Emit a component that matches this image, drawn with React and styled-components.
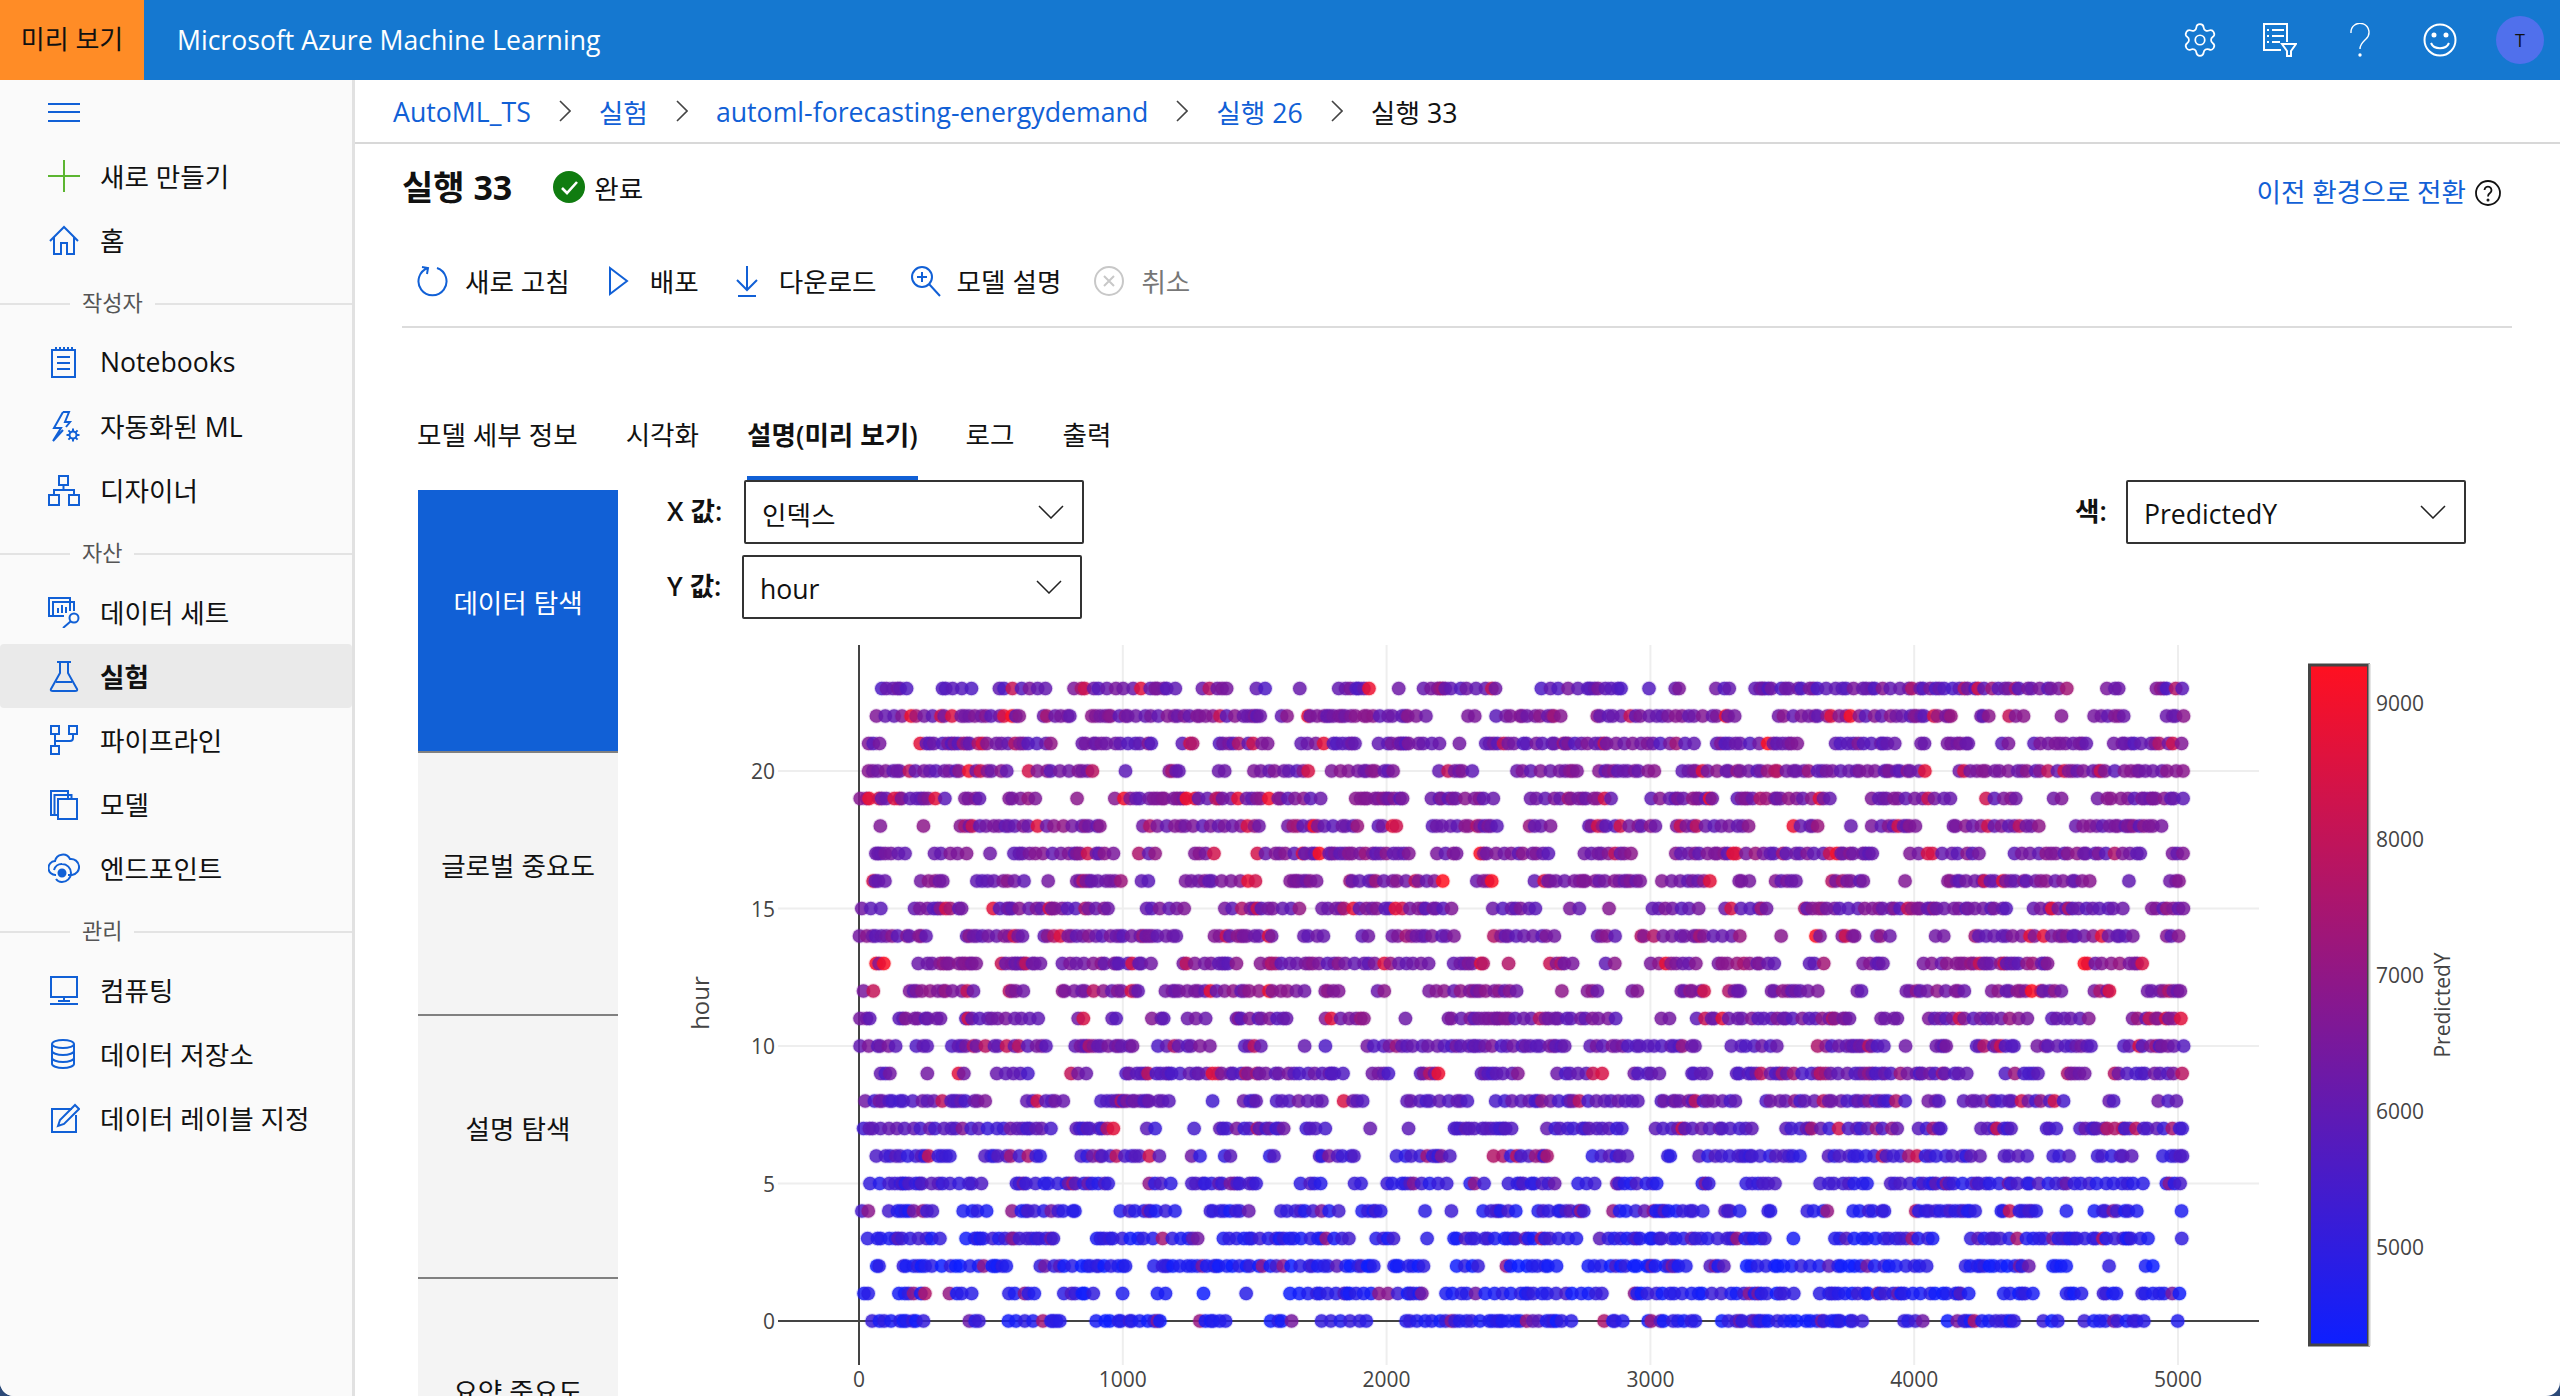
import React from "react";
import styled, { createGlobalStyle } from "styled-components";
import { Settings } from "lucide-react";

const BLUE = "#1160d6";
const FONT = `"Open Sans", "Noto Sans CJK KR", sans-serif`;

const GlobalStyle = createGlobalStyle`
  html, body {
    margin: 0;
    padding: 0;
    background: #2c4a78;
    overflow: hidden;
  }
  body {
    font-family: ${FONT};
    color: #111;
  }
`;

const Frame = styled.div`
  width: 2560px;
  height: 1396px;
  background: #fff;
  display: flex;
  flex-direction: column;
  overflow: hidden;
  border-radius: 0 0 14px 14px;
`;

/* top bar */
const TopBar = styled.header`
  height: 80px;
  flex: none;
  background: #1578d0;
  display: flex;
  align-items: center;
`;

const Preview = styled.div`
  width: 144px;
  height: 76px;
  padding-bottom: 4px;
  background: #ff8c26;
  color: #111;
  font-size: 26px;
  display: flex;
  align-items: center;
  justify-content: center;
`;

const Product = styled.div`
  margin-left: 33px;
  color: #fff;
  font-size: 26.6px;
  flex: 1;
`;

const TopIcons = styled.div`
  display: flex;
  align-items: center;
  padding-right: 16px;
`;

const TopIcon = styled.div`
  width: 80px;
  height: 80px;
  display: flex;
  align-items: center;
  justify-content: center;
  color: #fff;
`;

const Avatar = styled.div`
  width: 48px;
  height: 48px;
  margin-left: 16px;
  border-radius: 50%;
  background: #5070ec;
  color: #111;
  font-size: 18px;
  display: flex;
  align-items: center;
  justify-content: center;
`;

/* side nav */
const Body = styled.div`
  flex: 1;
  min-height: 0;
  display: flex;
`;

const Sidebar = styled.nav`
  width: 352px;
  flex: none;
  background: #fafafa;
  border-right: 3px solid #e1e1e1;
`;

const NavItem = styled.div`
  height: 64px;
  box-sizing: border-box;
  padding: 0 0 1px 48px;
  display: flex;
  align-items: center;
  gap: 20px;
  font-size: 26.6px;
  font-weight: ${(p) => (p.$active ? 700 : 400)};
  background: ${(p) => (p.$active ? "#eaeaea" : "transparent")};
  border-radius: 4px;
  color: #111;
`;

const NavSection = styled.div`
  height: 58px;
  display: flex;
  align-items: center;
  font-size: 22px;
  color: #555;

  &::before {
    content: "";
    width: 70px;
    height: 2px;
    margin-top: 6px;
    background: #e3e3e3;
  }
  &::after {
    content: "";
    flex: 1;
    height: 2px;
    margin-top: 6px;
    background: #e3e3e3;
  }
  span {
    padding: 0 12px;
  }
`;

const IconSvg = styled.svg`
  width: 32px;
  height: 32px;
  flex: none;
  fill: none;
  stroke: ${(p) => p.$color || BLUE};
  stroke-width: 2;
`;

/* main */
const Main = styled.main`
  flex: 1;
  min-width: 0;
  display: flex;
  flex-direction: column;
`;

const Breadcrumb = styled.div`
  height: 62px;
  flex: none;
  border-bottom: 2px solid #d8d8d8;
  padding-left: 38px;
  display: flex;
  align-items: center;
  gap: 28px;
  font-size: 26.7px;
`;

const Crumb = styled.span`
  color: ${(p) => (p.$current ? "#111" : BLUE)};
`;

const Head = styled.div`
  margin: 0 48px 0 47px;
  flex: none;
`;

const HeaderRow = styled.div`
  height: 86px;
  display: flex;
  align-items: center;
`;

const Title = styled.h1`
  margin: 0 41px 0 0;
  font-size: 34px;
  font-weight: 700;
  padding-bottom: 3px;
`;

const Status = styled.div`
  display: flex;
  align-items: center;
  gap: 9px;
  font-size: 26.6px;
  flex: 1;
`;

const SwitchLink = styled.div`
  display: flex;
  align-items: center;
  gap: 9px;
  margin-right: 11px;
  padding-top: 6px;
  color: ${BLUE};
  font-size: 26.6px;

  svg {
    margin-top: 6px;
  }
`;

const Toolbar = styled.div`
  height: 92px;
  padding: 4px 0 0 15px;
  border-bottom: 2px solid #dcdcdc;
  display: flex;
  align-items: center;
  gap: 32px;
`;

const ToolButton = styled.div`
  display: flex;
  align-items: center;
  gap: 16px;
  font-size: 26.6px;
  color: ${(p) => (p.$disabled ? "#777" : "#111")};

  svg {
    margin-top: 2px;
  }
`;

const Tabs = styled.div`
  margin-top: 72px;
  height: 80px;
  padding-left: 15px;
  display: flex;
  gap: 48px;
`;

const Tab = styled.div`
  height: 80px;
  box-sizing: border-box;
  padding-bottom: 9px;
  display: flex;
  align-items: center;
  font-size: 26.6px;
  font-weight: ${(p) => (p.$active ? 600 : 400)};
  border-bottom: 4px solid ${(p) => (p.$active ? BLUE : "transparent")};
`;

const Workspace = styled.div`
  flex: 1;
  min-height: 0;
  display: flex;
  overflow: hidden;
`;

const SideTabs = styled.div`
  width: 200px;
  flex: none;
  margin: 10px 0 0 63px;
`;

const SideTab = styled.div`
  height: 263px;
  box-sizing: border-box;
  padding-bottom: 38px;
  display: flex;
  align-items: center;
  justify-content: center;
  font-size: 26.6px;
  background: ${(p) => (p.$active ? BLUE : "#f4f4f4")};
  color: ${(p) => (p.$active ? "#fff" : "#111")};
  border-bottom: 2px solid #808080;
`;

const Panel = styled.div`
  flex: 1;
  min-width: 0;
`;

const Controls = styled.div`
  padding: 0 94px 0 49px;
`;

const ControlRow = styled.div`
  display: flex;
  justify-content: space-between;
  margin-top: ${(p) => p.$gap || 0}px;
`;

const Field = styled.div`
  display: flex;
  align-items: center;
`;

const FieldLabel = styled.label`
  width: ${(p) => p.$width}px;
  font-size: 26.6px;
  font-weight: 600;
  padding-bottom: 6px;
`;

const Select = styled.div`
  width: 340px;
  height: 64px;
  box-sizing: border-box;
  border: 2px solid #333;
  border-radius: 2px;
  padding: 3px 18px 0 16px;
  display: flex;
  align-items: center;
  justify-content: space-between;
  font-size: 26.6px;
  background: #fff;

  svg {
    margin-top: -3px;
  }
`;

const ChartBox = styled.div`
  margin: 20px 0 0 22px;
  width: 1920px;
  height: 756px;
`;

const ChartText = styled.text`
  font-family: ${FONT};
  font-size: ${(p) => p.$size || 21}px;
  fill: #444;
`;

/* icons */
const Icon = ({ children, color, ...rest }) => (
  <IconSvg viewBox="0 0 32 32" $color={color} {...rest}>
    {children}
  </IconSvg>
);

const Chevron = () => (
  <svg width="12" height="22" viewBox="0 0 12 22" fill="none" stroke="#444" strokeWidth="1.6">
    <path d="M1 1l10 10L1 21" />
  </svg>
);

const SelectChevron = () => (
  <svg width="26" height="14" viewBox="0 0 26 14" fill="none" stroke="#222" strokeWidth="1.5">
    <path d="M1 1l12 12L25 1" />
  </svg>
);

const icons = {
  menu: <path d="M0 8h32M0 16h32M0 25h32" />,
  plus: <path d="M16 0v32M0 16h32" />,
  home: <path d="M2 17L16 3l14 14M6 13v17h7V19h6v11h7V13" />,
  notebook: (
    <>
      <rect x="4" y="4" width="23" height="27" />
      <path d="M8 1v3M12 1v3M16 1v3M20 1v3M24 1v3M9 11h13M9 17h13M9 23h13" />
    </>
  ),
  auto: (
    <>
      <path d="M15 2h6l-4 10h5l-4 5M15 2L6 18h7L5 31l10-11" />
      <circle cx="25" cy="25" r="3.5" />
      <path d="M25 18.5v3M25 28.5v3M18.5 25h3M28.5 25h3M20.4 20.4l2 2M27.6 27.6l2 2M29.6 20.4l-2 2M22.4 27.6l-2 2" />
    </>
  ),
  designer: (
    <>
      <rect x="11" y="2" width="9" height="9" />
      <rect x="1" y="21" width="10" height="10" />
      <rect x="21" y="21" width="10" height="10" />
      <path d="M15.5 11v5M6 21v-5h20v5" />
    </>
  ),
  dataset: (
    <>
      <path d="M22 15V2H1v18h15" />
      <path d="M5 20V6h21v9" />
      <path d="M10 17v-5M14 17V9M18 17v-6" />
      <circle cx="26" cy="22" r="4.5" />
      <path d="M22.5 25.5L15 32" />
    </>
  ),
  flask: <path d="M9 2h14M12 2v11L3 29q-1 2 2 2h22q3 0 2-2L20 13V2M8 22h16" />,
  pipeline: (
    <>
      <rect x="3" y="2" width="8" height="8" />
      <rect x="21" y="2" width="8" height="8" />
      <rect x="3" y="22" width="8" height="8" />
      <path d="M7 10v12M25 10v4a3 3 0 0 1-3 3H7" />
    </>
  ),
  model: (
    <>
      <rect x="10" y="11" width="19" height="20" />
      <path d="M10 27H3V3h17v8M6.500 27V7h17v4" />
    </>
  ),
  endpoint: (
    <>
      <path d="M8 23a7 7 0 0 1-1-14 8 8 0 0 1 15-2 8 8 0 0 1 2 16h-4" />
      <path d="M6 18a8 8 0 0 1 8-6 8 8 0 0 1 0 18 7 7 0 0 1-6-3" />
      <circle cx="14" cy="21" r="3.500" fill={BLUE} />
    </>
  ),
  compute: (
    <>
      <rect x="3" y="3" width="26" height="20" />
      <path d="M16 23v4M10 27h12M2 30h28" />
    </>
  ),
  database: (
    <>
      <ellipse cx="15" cy="6" rx="11" ry="4" />
      <path d="M4 6v20c0 2 5 4 11 4s11-2 11-4V6M4 13c0 2 5 4 11 4s11-2 11-4M4 20c0 2 5 4 11 4s11-2 11-4" />
    </>
  ),
  label: (
    <>
      <path d="M24 7H4v23h24V13" />
      <path d="M10 24l2-6L27 3l4 4-15 15z" />
    </>
  ),
  refresh: <path d="M11 3a14 14 0 1 0 9 0M5 2l6 1-1 6" />,
  play: <path d="M8 3l17 13L8 29z" />,
  download: <path d="M16 1v24M6 15l10 10 10-10M7 31h18" />,
  explain: (
    <>
      <circle cx="13" cy="12" r="10" />
      <path d="M20 19l11 12M13 7v10M8 12h10" />
    </>
  ),
  cancel: (
    <>
      <circle cx="16" cy="16" r="14" />
      <path d="M11 11l10 10M21 11L11 21" />
    </>
  ),
};

/* scatter data, seeded so every render is the same */
const mulberry = (seed) => () => {
  seed = (seed + 0x6d2b79f5) | 0;
  let t = Math.imul(seed ^ (seed >>> 15), 1 | seed);
  t = (t + Math.imul(t ^ (t >>> 7), 61 | t)) ^ t;
  return ((t ^ (t >>> 14)) >>> 0) / 4294967296;
};

const hourMean = [0.1, 0.1, 0.07, 0.13, 0.15, 0.18, 0.22, 0.28, 0.32, 0.34, 0.36, 0.4, 0.44, 0.42, 0.42, 0.4, 0.42, 0.42, 0.42, 0.42, 0.42, 0.38, 0.42, 0.36];

const colorAt = (t) => {
  const c = Math.min(1, Math.max(0, t));
  const r = Math.round(13 + (255 - 13) * c);
  const g = Math.round(31 - 15 * c);
  const b = Math.round(255 - (255 - 32) * c);
  return `rgb(${r},${g},${b})`;
};

const buildDots = () => {
  const rnd = mulberry(4242);
  const dots = [];
  for (let hour = 0; hour < 24; hour++) {
    const y = 1322 - hour * 27.5;
    let x = 859 + rnd() * 24;
    while (x < 2184) {
      const tail = rnd() < 0.18 ? rnd() * 0.55 : 0;
      const t = hourMean[hour] + (rnd() - 0.5) * 0.2 + tail;
      dots.push({ x, y, color: colorAt(t) });
      const r = rnd();
      x += r < 0.1 ? 20 + rnd() * 26 : 2 + rnd() * 8;
    }
  }
  return dots;
};

const dots = buildDots();

const xTicks = [0, 1000, 2000, 3000, 4000, 5000];
const yTicks = [5, 10, 15, 20];
const xOf = (v) => 859 + v * 0.2638;
const yOf = (v) => 1322 - v * 27.5;

const Chart = () => (
  <svg width="1920" height="756" viewBox="640 640 1920 756">
    <defs>
      <linearGradient id="scale" x1="0" y1="0" x2="0" y2="1">
        <stop offset="0" stopColor="#ff1020" />
        <stop offset="1" stopColor="#0d1fff" />
      </linearGradient>
    </defs>
    {xTicks.slice(1).map((v) => (
      <line key={v} x1={xOf(v)} x2={xOf(v)} y1="646" y2="1366" stroke="#eee" strokeWidth="2" />
    ))}
    {yTicks.map((v) => (
      <line key={v} x1="778" x2="2259" y1={yOf(v)} y2={yOf(v)} stroke="#eee" strokeWidth="2" />
    ))}
    <line x1="778" x2="2259" y1="1322" y2="1322" stroke="#444" strokeWidth="2" />
    <line x1="859" x2="859" y1="646" y2="1366" stroke="#444" strokeWidth="2" />
    {dots.map((d, i) => (
      <circle key={i} cx={d.x} cy={d.y} r="6.8" fill={d.color} fillOpacity="0.85" stroke={d.color} strokeOpacity="0.18" strokeWidth="2" />
    ))}
    {[0, ...yTicks].map((v) => (
      <ChartText key={v} x="775" y={yOf(v) + 8} textAnchor="end">
        {v}
      </ChartText>
    ))}
    {xTicks.map((v) => (
      <ChartText key={v} x={xOf(v)} y="1388" textAnchor="middle">
        {v}
      </ChartText>
    ))}
    <ChartText $size={24} transform="translate(709 1004) rotate(-90)" textAnchor="middle">
      hour
    </ChartText>
    <rect x="2309.500" y="666" width="59" height="680" fill="url(#scale)" stroke="#444" strokeWidth="3" />
    <line x1="2369.500" x2="2369.500" y1="665" y2="1347" stroke="#ccc" strokeWidth="2" />
    {[9000, 8000, 7000, 6000, 5000].map((v, i) => (
      <ChartText key={v} x="2376" y={703 + i * 135.9 + 9}>
        {v}
      </ChartText>
    ))}
    <ChartText transform="translate(2450 1006) rotate(-90)" textAnchor="middle">
      PredictedY
    </ChartText>
  </svg>
);

const navTop = [
  ["plus", "새로 만들기", "#5cb531"],
  ["home", "홈"],
];
const navSections = [
  ["작성자", [["notebook", "Notebooks"], ["auto", "자동화된 ML"], ["designer", "디자이너"]]],
  ["자산", [["dataset", "데이터 세트"], ["flask", "실험", null, true], ["pipeline", "파이프라인"], ["model", "모델"], ["endpoint", "엔드포인트"]]],
  ["관리", [["compute", "컴퓨팅"], ["database", "데이터 저장소"], ["label", "데이터 레이블 지정"]]],
];
const crumbs = ["AutoML_TS", "실험", "automl-forecasting-energydemand", "실행 26"];
const tools = [
  ["refresh", "새로 고침"],
  ["play", "배포"],
  ["download", "다운로드"],
  ["explain", "모델 설명"],
  ["cancel", "취소", true],
];
const tabs = ["모델 세부 정보", "시각화", "설명(미리 보기)", "로그", "출력"];
const sideTabs = ["데이터 탐색", "글로벌 중요도", "설명 탐색", "요약 중요도"];

const NavRow = ({ icon, label, color, active }) => (
  <NavItem $active={active}>
    <Icon color={color}>{icons[icon]}</Icon>
    {label}
  </NavItem>
);

export default function App() {
  return (
    <>
      <GlobalStyle />
      <Frame>
        <TopBar>
          <Preview>미리 보기</Preview>
          <Product>Microsoft Azure Machine Learning</Product>
          <TopIcons>
            <TopIcon>
              <Settings size={38} strokeWidth={1.1} />
            </TopIcon>
            <TopIcon>
              <svg width="34" height="34" viewBox="0 0 34 34" fill="none" stroke="currentColor" strokeWidth="2">
                <path d="M18 27H1V1h23v18" />
                <path d="M9 7h12M9 13h12M9 19h8M4 7h2M4 13h2M4 19h2" />
                <path d="M19 21h14l-5 7v5h-4v-5z" />
              </svg>
            </TopIcon>
            <TopIcon>
              <svg width="20" height="34" viewBox="0 0 20 34" fill="none" stroke="currentColor" strokeWidth="1.400">
                <path d="M1 10a9 9 0 1 1 15 6c-3 3-6 5-6 10" />
                <circle cx="10" cy="32" r="1" fill="currentColor" />
              </svg>
            </TopIcon>
            <TopIcon>
              <svg width="34" height="34" viewBox="0 0 34 34" fill="none" stroke="currentColor" strokeWidth="2">
                <circle cx="17" cy="17" r="15.500" />
                <path d="M8 20c3 7 15 7 18 0" />
                <circle cx="11" cy="12" r="1.500" fill="currentColor" />
                <circle cx="23" cy="12" r="1.500" fill="currentColor" />
              </svg>
            </TopIcon>
            <Avatar>T</Avatar>
          </TopIcons>
        </TopBar>
        <Body>
          <Sidebar>
            <NavItem>
              <Icon>{icons.menu}</Icon>
            </NavItem>
            {navTop.map(([icon, label, color]) => (
              <NavRow key={label} icon={icon} label={label} color={color} />
            ))}
            {navSections.map(([title, items]) => (
              <React.Fragment key={title}>
                <NavSection>
                  <span>{title}</span>
                </NavSection>
                {items.map(([icon, label, color, active]) => (
                  <NavRow key={label} icon={icon} label={label} color={color} active={active} />
                ))}
              </React.Fragment>
            ))}
          </Sidebar>
          <Main>
            <Breadcrumb>
              {crumbs.map((c) => (
                <React.Fragment key={c}>
                  <Crumb>{c}</Crumb>
                  <Chevron />
                </React.Fragment>
              ))}
              <Crumb $current>실행 33</Crumb>
            </Breadcrumb>
            <Head>
              <HeaderRow>
                <Title>실행 33</Title>
                <Status>
                  <svg width="32" height="32" viewBox="0 0 32 32">
                    <circle cx="16" cy="16" r="16" fill="#107c10" />
                    <path d="M9 17l5 5 10-11" fill="none" stroke="#fff" strokeWidth="2.600" />
                  </svg>
                  완료
                </Status>
                <SwitchLink>
                  이전 환경으로 전환
                  <svg width="26" height="26" viewBox="0 0 26 26" fill="none" stroke="#111" strokeWidth="1.800">
                    <circle cx="13" cy="13" r="12" />
                    <path d="M9.500 10a3.500 3.500 0 1 1 5.500 3c-1.500 1-2 1.700-2 3.500" />
                    <circle cx="13" cy="20" r="0.600" fill="#111" />
                  </svg>
                </SwitchLink>
              </HeaderRow>
              <Toolbar>
                {tools.map(([icon, label, disabled]) => (
                  <ToolButton key={label} $disabled={disabled}>
                    <Icon color={disabled ? "#c8c8c8" : undefined}>{icons[icon]}</Icon>
                    {label}
                  </ToolButton>
                ))}
              </Toolbar>
              <Tabs>
                {tabs.map((t, i) => (
                  <Tab key={t} $active={i === 2}>
                    {t}
                  </Tab>
                ))}
              </Tabs>
            </Head>
            <Workspace>
              <SideTabs>
                {sideTabs.map((t, i) => (
                  <SideTab key={t} $active={i === 0}>
                    {t}
                  </SideTab>
                ))}
              </SideTabs>
              <Panel>
                <Controls>
                  <ControlRow>
                    <Field>
                      <FieldLabel $width={77}>X 값:</FieldLabel>
                      <Select>
                        인덱스
                        <SelectChevron />
                      </Select>
                    </Field>
                    <Field>
                      <FieldLabel $width={51}>색:</FieldLabel>
                      <Select>
                        PredictedY
                        <SelectChevron />
                      </Select>
                    </Field>
                  </ControlRow>
                  <ControlRow $gap={11}>
                    <Field>
                      <FieldLabel $width={75}>Y 값:</FieldLabel>
                      <Select>
                        hour
                        <SelectChevron />
                      </Select>
                    </Field>
                  </ControlRow>
                </Controls>
                <ChartBox>
                  <Chart />
                </ChartBox>
              </Panel>
            </Workspace>
          </Main>
        </Body>
      </Frame>
    </>
  );
}
